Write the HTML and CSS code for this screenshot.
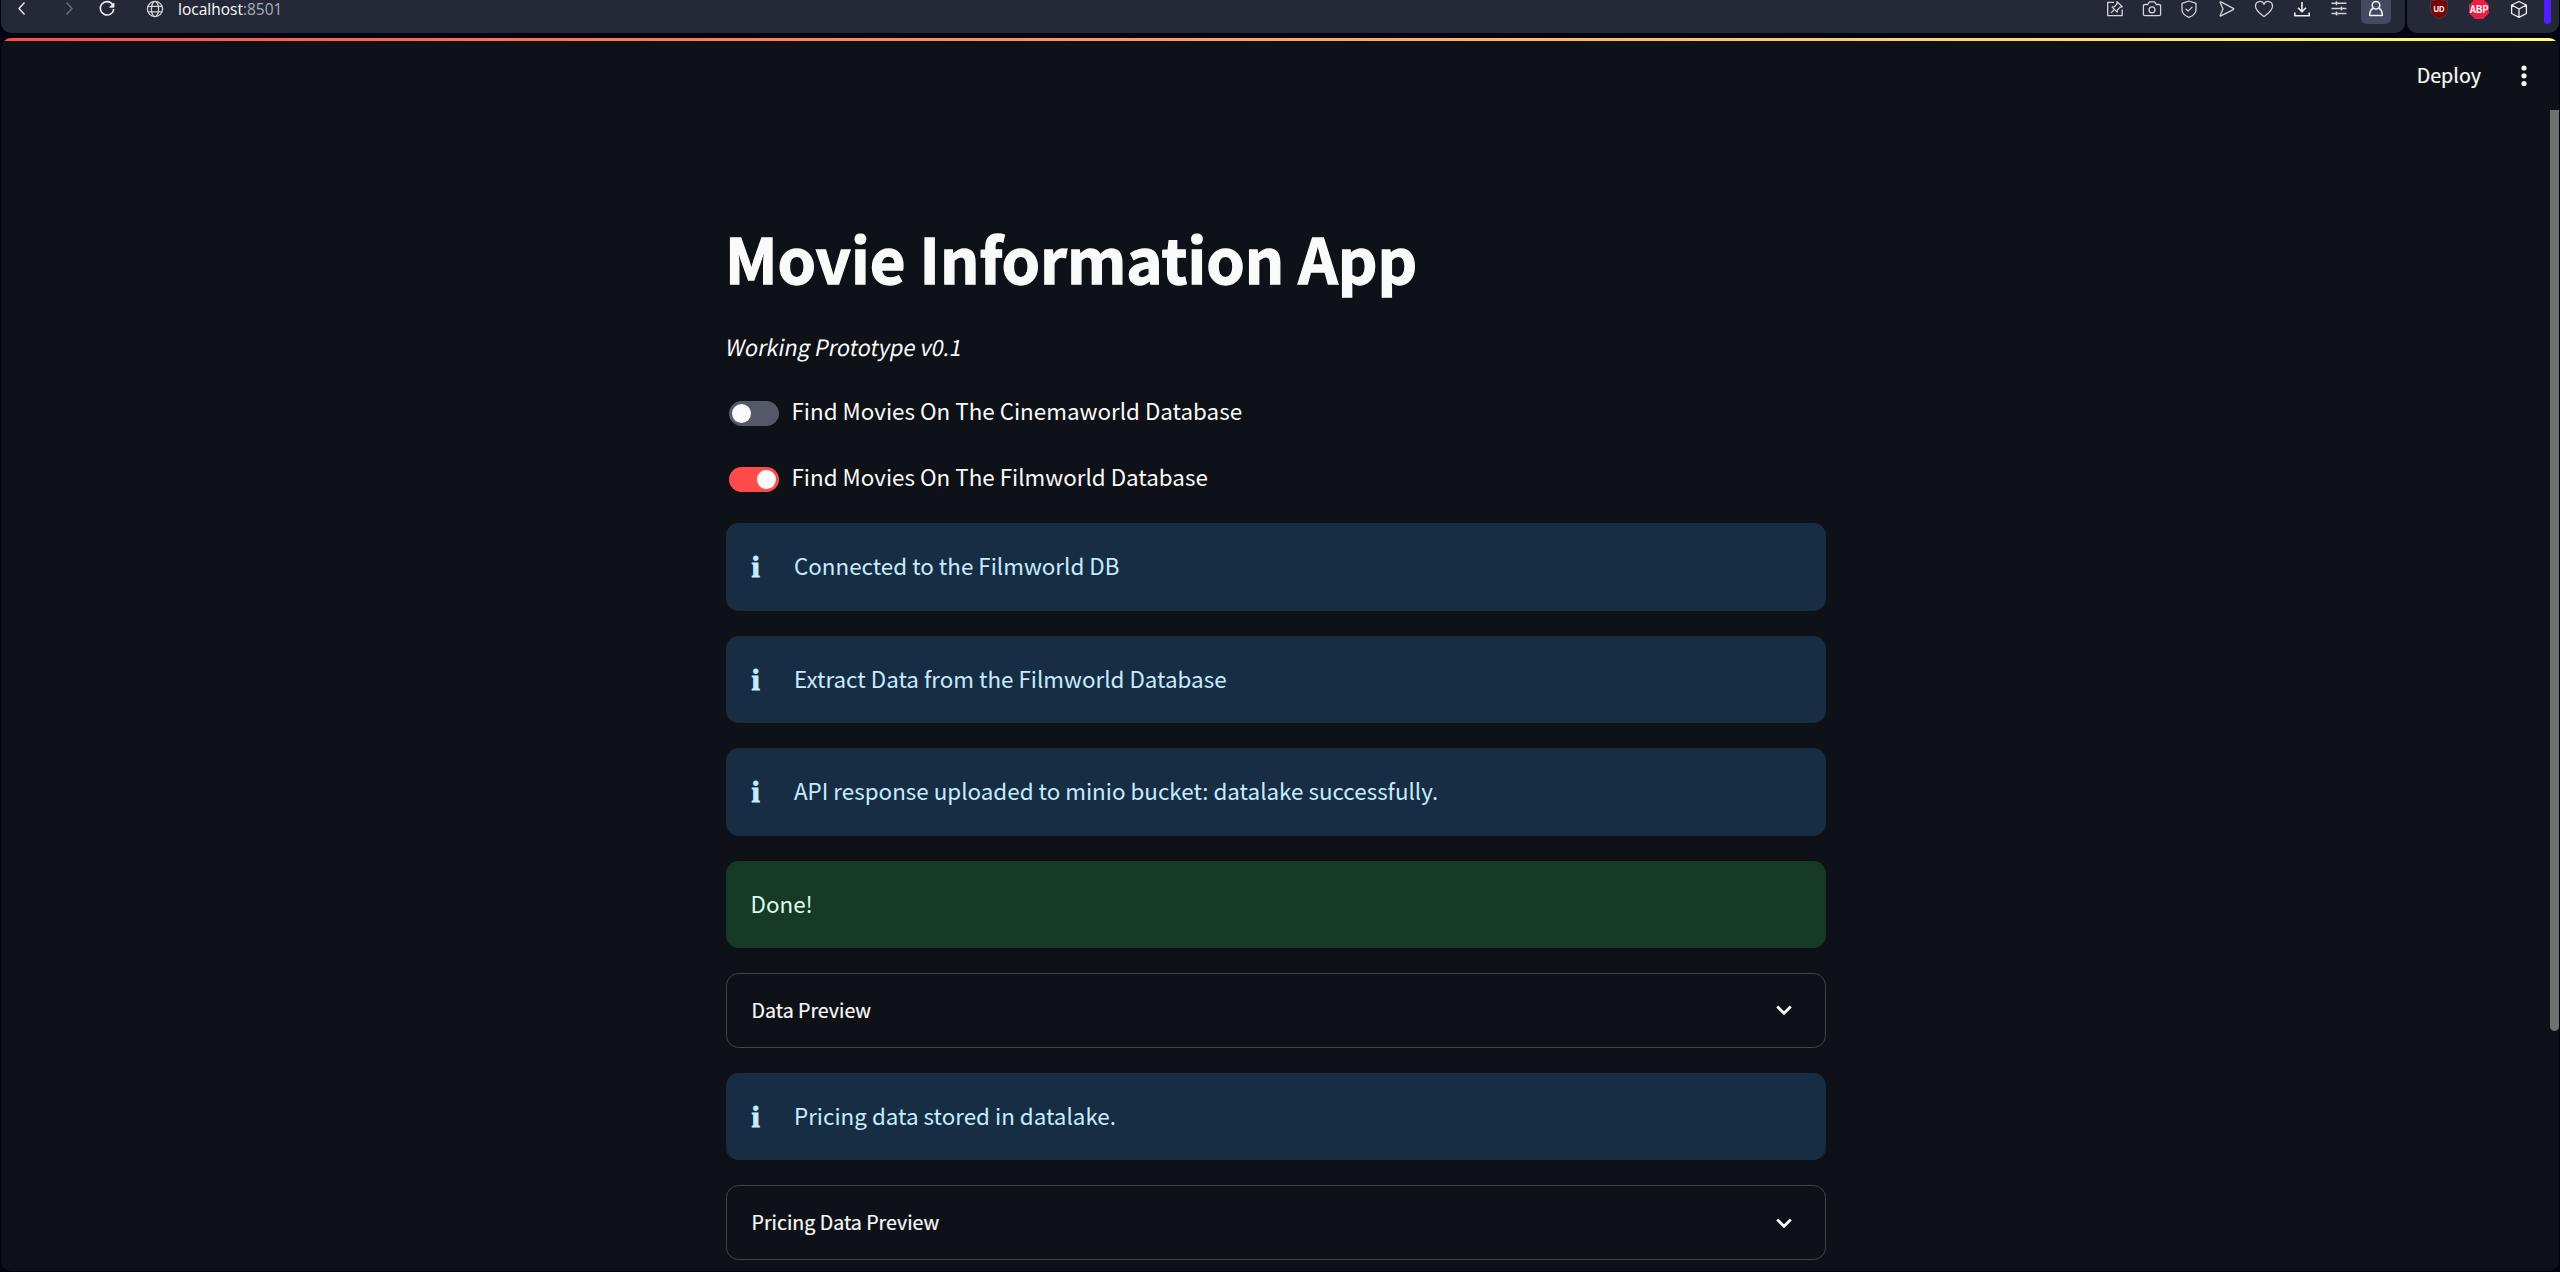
FILE: index.html
```html
<!DOCTYPE html>
<html lang="en">
<head>
<meta charset="utf-8">
<title>Movie Information App</title>
<link rel="stylesheet" href="styles.css">
</head>
<body>
<div class="browser">
  <div class="nav">
    <svg class="ico back" viewBox="0 0 24 22"><path d="M14.500 2.500 9 8.500 14.500 14.500" stroke="#e6e7ea" stroke-width="1.5"/></svg>
    <svg class="ico forward" viewBox="0 0 24 22"><path d="M9.500 2.500 15 8.500 9.500 14.500" stroke="#696c78" stroke-width="1.5"/></svg>
    <svg class="ico reload" viewBox="0 0 24 22"><path d="M17.600 4.600A6.700 6.700 0 1 0 18.700 9" stroke="#eeeef0" stroke-width="1.6"/><path d="M19 3v4.200h-4.500Z" fill="#eeeef0" stroke="#eeeef0" stroke-width=".8"/></svg>
    <svg class="ico globe" viewBox="0 0 24 22"><circle cx="12" cy="9" r="7.600"/><ellipse cx="12" cy="9" rx="3.600" ry="7.600"/><path d="M5 6.300h14M5 11.800h14"/></svg>
    <span class="url">localhost<span class="port">:8501</span></span>
    <div class="actions">
      <div class="cell"><svg class="ico" viewBox="0 0 24 22"><path d="M11 2.300H4.700v13.300h14.500V9.500"/><path d="m14 1.600 5.200 5.200-2 .3-2.600 2.600-.5 2.400-5-5 2.400-.5 2.500-2.700ZM11.300 9.600 8 12.900"/></svg></div>
      <div class="cell"><svg class="ico" viewBox="0 0 24 22"><path d="M4.800 4.500h3l1.600-2.600h5.200l1.600 2.600h3q1.400 0 1.400 1.400v8.300q0 1.400-1.400 1.400H4.800q-1.400 0-1.400-1.400V5.900q0-1.400 1.400-1.400Z"/><circle cx="12" cy="9.800" r="3"/></svg></div>
      <div class="cell"><svg class="ico" viewBox="0 0 24 22"><path d="M12 1 19 3.400v6q0 5-7 8-7-3-7-8v-6Z"/><path d="m8.700 8.800 2.400 2.300 4.300-4.200"/></svg></div>
      <div class="cell"><svg class="ico" viewBox="0 0 24 22"><path d="M5.200 2.400q-.2-.8.700-.5l12.400 6.500q.9.600 0 1.200L5.900 15.900q-.9.300-.7-.5L8 9Z"/></svg></div>
      <div class="cell"><svg class="ico" viewBox="0 0 24 22"><path d="M12 4.200C10-.3 3.500 1 3.500 6.200c0 4.300 4.600 7.100 8.500 10.400 3.900-3.300 8.500-6.100 8.500-10.400C20.500 1 14 -.3 12 4.200Z"/></svg></div>
      <div class="cell"><svg class="ico bold" viewBox="0 0 24 22"><path d="M12 2v9.500M8 7.800l4 4 4-4M4.800 12.500v3.200h14.400v-3.200"/></svg></div>
      <div class="cell"><svg class="ico" viewBox="0 0 24 22"><path d="M4.500 3.300h15M4.500 8.500h15M4.500 13.500h15M9.500 1.300v4M14.500 6.500v4M9.500 11.500v4" stroke-width="1.500"/></svg></div>
      <div class="cell"><div class="profile"><svg class="ico" viewBox="0 0 24 22"><circle cx="12" cy="5.200" r="3.800"/><path d="M9.300 8.300C6.800 9.200 5.700 12 5.700 15.600h12.600c0-3.600-1.100-6.400-3.600-7.300"/></svg></div></div>
    </div>
  </div>
  <div class="extensions">
    <svg class="ico" viewBox="0 0 24 22"><path d="M12-1.500C9.500.5 6.500 1 3.500 1v7.500q0 7 8.500 10.300 8.500-3.300 8.500-10.300V1C17.500 1 14.500.5 12-1.500Z" fill="#800000" stroke="#3c4049" stroke-width="1"/><text x="12" y="11.500" class="mark ub" textLength="11" lengthAdjust="spacingAndGlyphs">UD</text></svg>
    <svg class="ico" viewBox="0 0 24 22"><path d="M7.800-1h8.400L22 4.900v8.200L16.200 19H7.800L2 13.100V4.900Z" fill="#ed1e45" stroke="none"/><text x="12" y="13" class="mark abp" textLength="18.500" lengthAdjust="spacingAndGlyphs">ABP</text></svg>
    <svg class="ico cube" viewBox="0 0 24 22"><path d="M12 1.500 19.400 5v8.500L12 17.300 4.600 13.500V5ZM4.600 5 12 9l7.400-4M12 9v8.300"/></svg>
    <i class="accent"></i>
  </div>
</div>
<div class="app">
  <div class="decoration"></div>
  <header class="header">
    <span>Deploy</span>
    <svg class="dots" viewBox="0 0 6 22"><circle cx="3" cy="3" r="2.600"/><circle cx="3" cy="10.800" r="2.600"/><circle cx="3" cy="18.500" r="2.600"/></svg>
  </header>
  <div class="scrollbar"></div>
  <main class="main">
    <h1>Movie Information App</h1>
    <p class="version">Working Prototype v0.1</p>
    <div class="toggle"><span class="track"><i></i></span>Find Movies On The Cinemaworld Database</div>
    <div class="toggle"><span class="track on"><i></i></span>Find Movies On The Filmworld Database</div>
    <div class="stack">
      <div class="alert"><b>i</b>Connected to the Filmworld DB</div>
      <div class="alert"><b>i</b>Extract Data from the Filmworld Database</div>
      <div class="alert"><b>i</b>API response uploaded to minio bucket: datalake successfully.</div>
      <div class="alert success">Done!</div>
      <div class="expander"><span>Data Preview</span><svg class="chevron" viewBox="0 0 18 12"><path d="m2.200 2.500 6.800 6.700 6.800-6.700"/></svg></div>
      <div class="alert"><b>i</b>Pricing data stored in datalake.</div>
      <div class="expander"><span>Pricing Data Preview</span><svg class="chevron" viewBox="0 0 18 12"><path d="m2.200 2.500 6.800 6.700 6.800-6.700"/></svg></div>
    </div>
  </main>
</div>
</body>
</html>
```
FILE: styles.css
```css
* { box-sizing: border-box; }
body {
  margin: 0;
  height: 1272px;
  overflow: hidden;
  background: #020410;
  color: #fafafa;
  font-family: "Noto Sans CJK SC", sans-serif;
  font-size: 22.4px;
}

/* browser chrome */
.browser { display: flex; gap: 2px; height: 33px; padding: 0 1px; margin-bottom: 5px; }
.nav, .extensions { display: flex; background: #252836; border-radius: 0 0 10px 10px; }
.nav { flex: 1; }
.extensions { width: 152px; padding-left: 20px; gap: 16px; }
.ico {
  display: block;
  width: 24px; height: 22px; flex: none;
  fill: none; stroke: #d2d4da; stroke-width: 1.3;
  stroke-linejoin: round; overflow: visible;
}
.ico.bold { stroke: #eeeef2; stroke-width: 1.6; }
.back { margin-left: 9px; }
.forward { margin-left: 23px; }
.reload { margin-left: 14px; }
.globe { margin-left: 24px; }
.cube { stroke: #f2f2f4; }
.url { margin-left: 11px; font: 15.5px/19px "Open Sans", sans-serif; color: #fbfbfe; }
.port { color: #a5afbd; }
.actions { display: flex; margin-left: auto; margin-right: 10px; }
.cell { width: 37.4px; display: flex; justify-content: center; }
.profile { width: 30px; height: 24px; flex: none; padding-left: 3px; background: #454962; border-radius: 0 0 6px 6px; }
.profile .ico { stroke: #f4f4f6; stroke-width: 1.5; }
.mark { fill: #fff; stroke: none; text-anchor: middle; font-family: "Liberation Sans", sans-serif; font-weight: bold; }
.ub { font-size: 8.6px; }
.abp { font-size: 10.8px; }
.accent { width: 7px; height: 24px; margin-left: -3px; background: #4f20ff; border-radius: 0 0 4px 4px; }

/* app */
.app { position: relative; height: 1233px; margin: 0 1px; background: #0e1117; border-radius: 10px; overflow: hidden; }
.decoration { height: 3px; background: linear-gradient(90deg, #ff4b4b, #fffd80); }
.header { height: 69px; display: flex; justify-content: flex-end; align-items: center; padding-right: 32px; font-size: 19.7px; line-height: 30px; }
.header span { margin: -1px 40px 0 0; -webkit-text-stroke: .2px; }
.dots { width: 6px; height: 22px; fill: #fafafa; }
.scrollbar { position: absolute; right: 0; top: 72px; width: 9px; height: 921px; background: #6f7072; border-radius: 0 0 5px 5px; }

.main { width: 1100px; margin: 0 0 0 725px; padding-top: 107px; }
h1 { margin: 0 0 0 -1px; font-size: 61.6px; line-height: 82px; font-weight: 700; white-space: nowrap; -webkit-text-stroke: 1.3px #fafafa; }
.version { margin: 27px 0 0 -1px; line-height: 40px; transform: skewX(-11deg) scaleX(.972); transform-origin: 0 70%; }
.toggle { display: flex; height: 66px; line-height: 39px; }
.toggle:first-of-type { margin-top: 25px; }
.track { width: 50px; height: 25px; margin: 10px 12.5px 0 3px; padding: 3px; border-radius: 13px; background: #555867; }
.track i { display: block; width: 19px; height: 19px; border-radius: 50%; background: #fafafa; }
.track.on { background: #ff4b4b; }
.track.on i { margin-left: 25px; }
.stack { display: flex; flex-direction: column; gap: 25px; }
.alert { height: 87.5px; padding-left: 25px; line-height: 85px; border-radius: 12.5px; background: #172d43; color: #c7ebff; display: flex; }
.alert b { width: 43px; padding-left: .5px; font: bold 30px/87px "Liberation Serif", serif; -webkit-text-stroke: .9px #c7ebff; }
.success { padding-left: 24.5px; background: #173928; color: #dffde9; }
.expander { height: 74.8px; border: 1px solid #414347; border-radius: 12.5px; display: flex; align-items: center; justify-content: space-between; padding: 0 32px 0 24.5px; font-size: 19.6px; line-height: 72px; }
.expander span { margin-top: -1px; -webkit-text-stroke: .2px; }
.chevron { width: 18px; height: 12px; fill: none; stroke: #fafafa; stroke-width: 2.8; }
```
